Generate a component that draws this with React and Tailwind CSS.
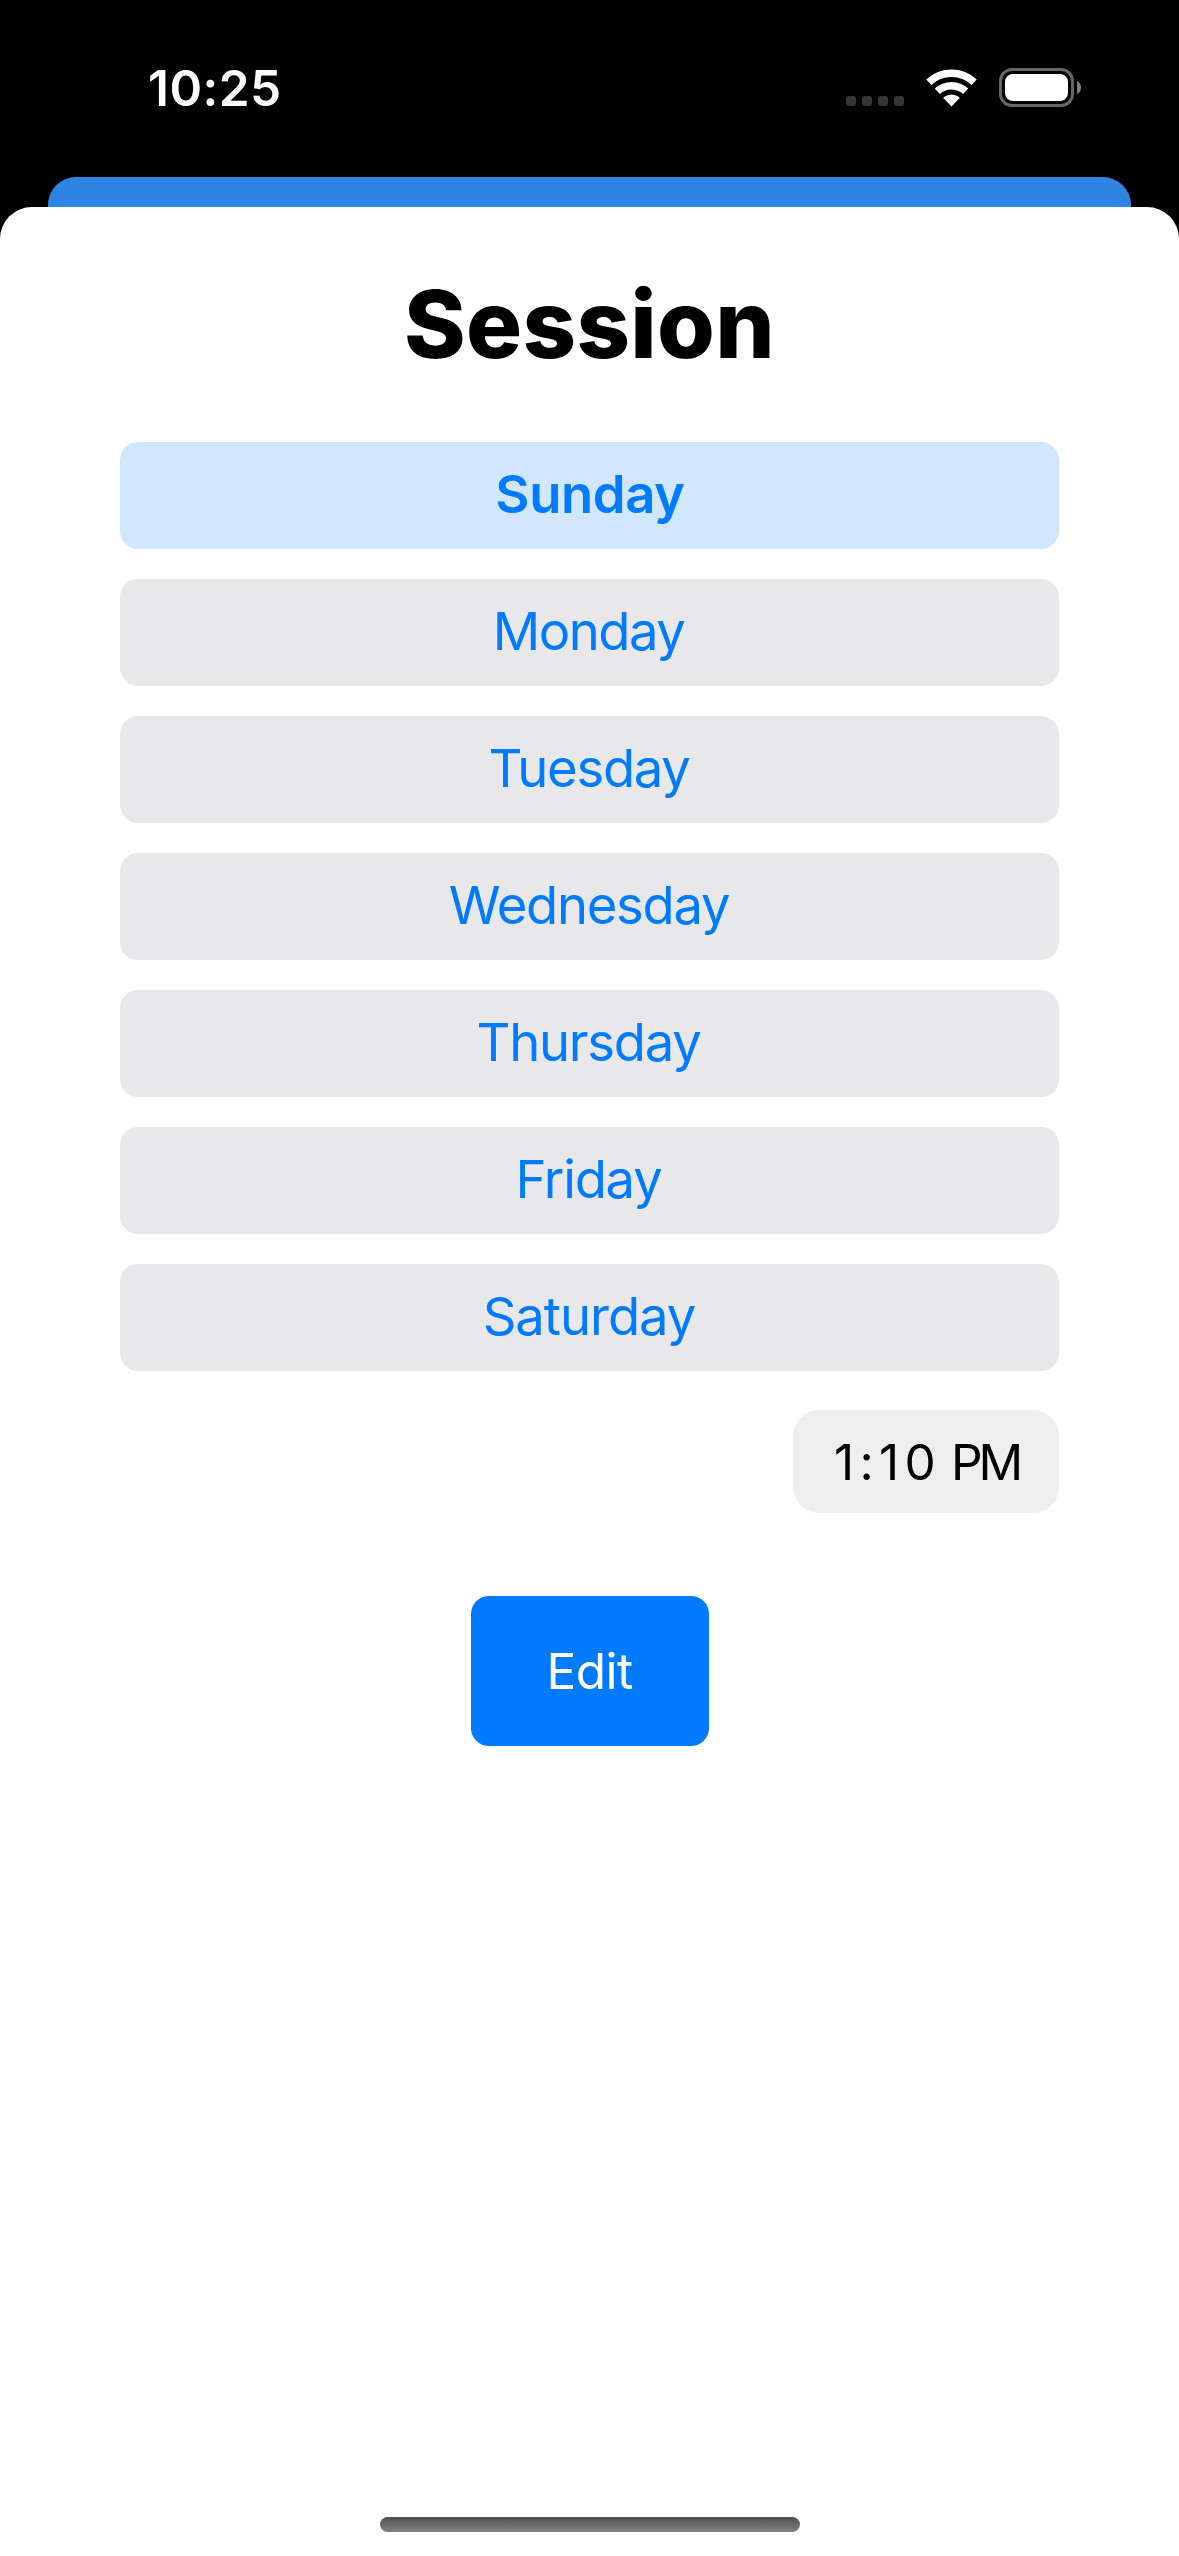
import React from "react";

const days = [
  { name: "Sunday", spacing: "tracking-[-0.4px] pl-[1px]", selected: true },
  { name: "Monday", spacing: "tracking-[-1.5px] pr-[2px]" },
  { name: "Tuesday", spacing: "tracking-[-1.3px] pr-[1px]" },
  { name: "Wednesday", spacing: "tracking-[-1.3px] pr-[1px]" },
  { name: "Thursday", spacing: "tracking-[-1.3px] pr-[2px]" },
  { name: "Friday", spacing: "tracking-[-1.25px] pr-[2px]" },
  { name: "Saturday", spacing: "tracking-[-1.05px] pr-[1px]" },
];

function WifiIcon() {
  return (
    <svg className="ml-[22px] h-[38px] w-[51px]" viewBox="0 0 51 38" fill="none">
      <path d="M2.82 13.2A33.25 33.25 0 0 1 48.18 13.2" stroke="white" strokeWidth="7.5" />
      <path d="M11.35 22.3A20.75 20.75 0 0 1 39.65 22.3" stroke="white" strokeWidth="7.5" />
      <path d="M25.5 37.5L17.6 29.2Q17.4 28.6 18 28.1A12 12 0 0 1 33 28.1Q33.6 28.6 33.4 29.2Z" fill="white" />
    </svg>
  );
}

function BatteryIcon() {
  return (
    <svg className="ml-[22px] h-[39px] w-[82px]" viewBox="0 0 82 39" fill="none">
      <rect x="1.5" y="1.5" width="72" height="36" rx="11.5" stroke="#666666" strokeWidth="3" />
      <rect x="6" y="6" width="63" height="27" rx="8" fill="white" />
      <path d="M78 13C80.7 14.2 82 16.6 82 19.5C82 22.4 80.7 24.8 78 26Z" fill="#808080" />
    </svg>
  );
}

function StatusBar() {
  return (
    <header className="flex h-[177px] items-start justify-between pr-[98px] pl-[148px]">
      <div className="mt-[58px] text-[49.5px] leading-[60px] font-semibold tracking-[0.45px] text-white">
        10:25
      </div>
      <div className="mt-[68px] flex items-center">
        <div className="mt-[27px] flex gap-[6px]">
          {[0, 1, 2, 3].map((n) => (
            <span key={n} className="size-[10px] rounded-[3px] bg-[#353535]" />
          ))}
        </div>
        <WifiIcon />
        <BatteryIcon />
      </div>
    </header>
  );
}

export default function App() {
  return (
    <div className="flex h-[2556px] w-[1179px] flex-col overflow-hidden bg-black font-['Inter',sans-serif]">
      <StatusBar />
      <div className="mx-[48px] h-[30px] shrink-0 rounded-t-[28px] bg-[#2d84e1]" />
      <main className="flex flex-1 flex-col items-center rounded-t-[32px] bg-white px-[120px]">
        <h1 className="mt-[60px] h-[114px] text-[93.5px] leading-[114px] font-extrabold tracking-[0.3px] text-black">
          Session
        </h1>
        <div className="mt-[61px] flex w-full flex-col gap-[30px]">
          {days.map((day) => (
            <button
              key={day.name}
              className={`flex h-[107px] w-full items-center justify-center rounded-[18px] pb-[3px] text-[52.6px] leading-none text-[#007aff] ${day.spacing} ${
                day.selected ? "bg-[#d1e7ff] font-semibold" : "bg-[#e8e8ea] font-normal"
              }`}
            >
              {day.name}
            </button>
          ))}
        </div>
        <button className="mt-[39px] flex h-[103px] w-[266px] items-center gap-[10px] self-end rounded-[26px] bg-[#eeeeef] pt-[2px] pl-[41px] text-[49.5px] leading-none text-black">
          <span className="tracking-[5.3px]">1:10</span>
          <span className="tracking-[-4px]">PM</span>
        </button>
        <button className="mt-[83px] flex h-[150px] w-[238px] items-center justify-center rounded-[18px] bg-[#007aff] pt-[1px] text-[49.5px] leading-none tracking-[-0.5px] text-white">
          Edit
        </button>
        <div className="mt-auto mb-[24px] h-[15px] w-[420px] rounded-full bg-linear-to-b from-[#505050] to-[#828282]" />
      </main>
    </div>
  );
}
